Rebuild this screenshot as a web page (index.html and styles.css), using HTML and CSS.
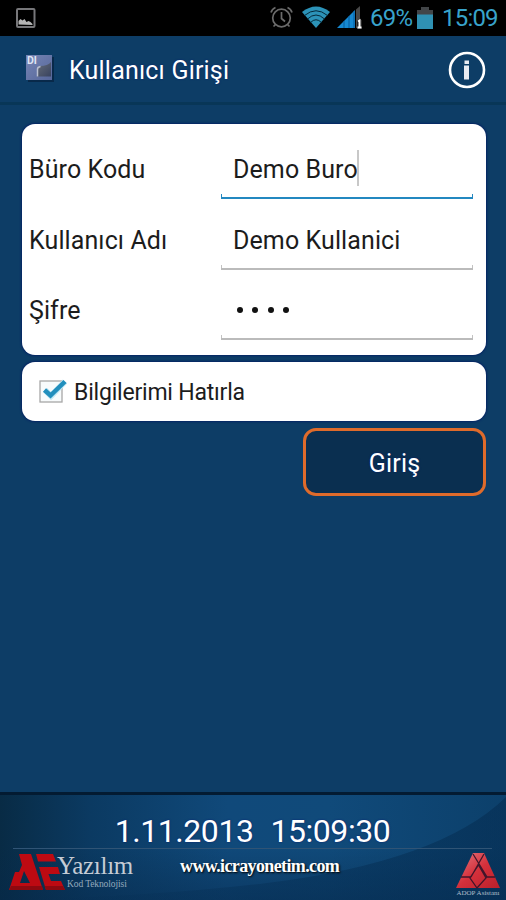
FILE: index.html
```html
<!DOCTYPE html>
<html lang="tr">
<head>
<meta charset="utf-8">
<title>Kullanıcı Girişi</title>
<link rel="stylesheet" href="styles.css">
</head>
<body>
<div class="status">
  <svg class="status-picture" width="20" height="21" viewBox="0 0 20 21"><rect x="1" y="1" width="17.500" height="18" rx="1" fill="none" stroke="#77777a" stroke-width="2"/><path d="M2.500 16.500V13l2-2 2 1.500 2-1.500 2 3 2-1 2 1 2 2v1z" fill="#b5b5b5"/></svg>
  <div class="status-right">
    <svg class="alarm" width="23" height="23" viewBox="0 0 23 23" fill="none" stroke="#6b6b6b" stroke-width="1.700"><circle cx="11.500" cy="12" r="8.800"/><path d="M11.500 6v6.500l3.500 3M1 6.500Q2 3 5.500 1.500M22 6.500Q21 3 17.500 1.500M5.500 18.500l-2 2M17.500 18.500l2 2"/></svg>
    <svg class="wifi" width="28" height="22" viewBox="0 0 28 22"><path d="M0 6Q14-5 28 6L14 22z" fill="#2c93b8"/><path d="M2.500 9.500Q14 0 25.500 9.500M5.500 13Q14 5 22.500 13M8.500 16.500Q14 11 19.500 16.500" fill="none" stroke="#04293a" stroke-width="1"/></svg>
    <svg class="signal" width="26" height="23" viewBox="0 0 26 23"><path d="M0 22L18 4V22z" fill="#1688d0"/><path d="M7 15v7M12 10v12M17 5v17" stroke="#055b9c" stroke-width="1"/><path d="M19 3.500L23 0v22h-4z" fill="#484848"/><path d="M20 14h5v9h-5z" fill="#222"/><path d="M21 15.500l1.500-1v7M20.500 21.500h4" fill="none" stroke="#fff" stroke-width="2"/></svg>
    <span class="percent">69%</span>
    <svg class="battery" width="16" height="22" viewBox="0 0 16 22"><path d="M4 0h8v3h4v5H0V3h4z" fill="#424548"/><path d="M0 7.500h16V22H0z" fill="#2f91b3"/></svg>
    <span class="time">15:09</span>
  </div>
</div>
<header class="header">
  <svg class="app-icon" width="30" height="30" viewBox="0 0 30 30"><defs><linearGradient id="tile" x2="1" y2="1"><stop stop-color="#7585b4"/><stop offset="1" stop-color="#56669a"/></linearGradient><linearGradient id="fold" x2="1" y2="1"><stop stop-color="#8b909d"/><stop offset=".35" stop-color="#565e70"/><stop offset="1" stop-color="#38435f"/></linearGradient></defs><rect x="3" y="3" width="26" height="25" fill="#08294a"/><rect x="1" y="1" width="26" height="25" fill="url(#tile)"/><path d="M12 22.500V15q0-3 3-3 8 0 11-4v14.500z" fill="url(#fold)"/><path d="M12.500 22.500V15q0-2 3-2.500" fill="none" stroke="#b9bfd0" stroke-width="1.500"/><text x="2" y="10" class="tile-text">DI</text></svg>
  <h1>Kullanıcı Girişi</h1>
  <svg class="info" width="38" height="38" viewBox="0 0 38 38"><circle cx="19" cy="19" r="17" fill="none" stroke="#fff" stroke-width="2.600"/><path d="M16.500 9.500h4.500v3.500h-4.500zM16 14.500h5v14h-5z" fill="#e9ebf2"/></svg>
</header>
<main>
  <section class="card fields">
    <div class="row"><label>Büro Kodu</label><div class="field active"><span>Demo Buro</span><i class="caret"></i></div></div>
    <div class="row"><label>Kullanıcı Adı</label><div class="field"><span>Demo Kullanici</span></div></div>
    <div class="row"><label>Şifre</label><div class="field dots"><i></i><i></i><i></i><i></i></div></div>
  </section>
  <section class="card remember">
    <svg width="29" height="25" viewBox="0 0 29 25"><rect x="1" y="2" width="22" height="21" fill="#f8fbfc" stroke="#a7a7a7" stroke-width="1.300"/><path d="M6 11l6 6L26 2.500" fill="none" stroke="#bfe8f5" stroke-width="6"/><path d="M5.500 11l6 5.500L26 2.500" fill="none" stroke="#228fbd" stroke-width="4.500"/></svg>
    <span>Bilgilerimi Hatırla</span>
  </section>
  <button class="login"><span>Giriş</span></button>
</main>
<footer class="footer">
  <svg class="sweep" viewBox="0 0 506 107" preserveAspectRatio="none"><defs><linearGradient id="shade"><stop stop-color="#052d52" stop-opacity="0"/><stop offset=".5" stop-color="#052d52" stop-opacity=".4"/><stop offset="1" stop-color="#052d52" stop-opacity=".6"/></linearGradient></defs><path d="M506 2Q440 68 265 90Q150 104 0 107H506z" fill="url(#shade)"/></svg>
  <div class="clock"><span>1.11.2013</span><span>15:09:30</span></div>
  <div class="brands">
    <div class="yazilim">
      <svg width="56" height="38" viewBox="0 0 56 38"><defs><linearGradient id="red" x2="0" y2="1" gradientUnits="userSpaceOnUse" y1="0"><stop stop-color="#c20b13"/><stop offset="1" stop-color="#b70810"/></linearGradient></defs><path fill="#bd0a12" fill-rule="evenodd" d="M10 1H22L34 37H0L6 19H10L13 12zM15 18L11 30H21zM27 1H44L47 8.500H29zM30 14H49L51 21H39.500L42 28H52L56 37H37z"/><path d="M0 37L2 33H33L34 37zM37 37L35.500 33H54L56 37z" fill="#8d0910"/></svg>
      <div class="brand-text"><span class="name">Yazılım</span><span class="tag">Kod Teknolojisi</span></div>
    </div>
    <span class="url">www.icrayonetim.com</span>
    <div class="assistant">
      <svg width="44" height="36" viewBox="0 0 44 36"><defs><linearGradient id="tri" x2="1" y2="1"><stop stop-color="#e37a82"/><stop offset=".5" stop-color="#d4303b"/><stop offset="1" stop-color="#b9202b"/></linearGradient></defs><path d="M17 0H28L44 35H0z" fill="url(#tri)"/><path d="M17 1L31 24M28 1L15 24M22.500 12L14 25 21 35 30 25zM5 24H15M30 24H39" fill="none" stroke="#42152a" stroke-width="1.300"/></svg>
      <span>ADOP Asistanı</span>
    </div>
  </div>
</footer>
</body>
</html>
```
FILE: styles.css
```css
* { box-sizing: border-box; }
body { margin: 0; width: 506px; height: 900px; overflow: hidden; display: flex; flex-direction: column; background: #0d3d66; font-family: Roboto, sans-serif; color: #1c1c1c; }
svg { display: block; flex: none; }
span, label, h1 { white-space: nowrap; }
.status { height: 36px; flex: none; background: #000; display: flex; justify-content: space-between; padding: 0 8px 0 16px; }
.status-picture { margin-top: 8px; }
.status-right { display: flex; align-items: flex-start; color: #38a3cb; font-size: 24px; line-height: 37px; }
.alarm { margin: 6px 9px 0 0; }
.wifi { margin: 6px 7px 0 0; }
.signal { margin: 6px 7px 0 0; }
.percent { width: 42px; letter-spacing: -0.7px; margin-right: 5px; }
.battery { margin: 7px 9px 0 0; }
.time { width: 56px; letter-spacing: -0.8px; }
.header { height: 69px; flex: none; border-bottom: 3px solid #083657; display: flex; align-items: center; padding: 0 20px 0 25px; }
.app-icon { margin-right: 14px; }
.tile-text { font: bold 10.5px Roboto, sans-serif; fill: #dfe5f4; }
h1 { margin: 4px auto 0 0; font-size: 25px; font-weight: 400; line-height: 30px; letter-spacing: 0.2px; color: #fff; text-shadow: 0 0 2px #061d72; }
.info { margin: 1px 0 0; }
main { flex: 1; padding: 19px 20px 0 22px; display: flex; flex-direction: column; }
.card { width: 464px; background: #fff; border-radius: 13px; box-shadow: 0 0 2px 1px #052463; }
.fields { height: 231px; padding: 11px 13px 0 7px; }
.row { height: 70.5px; display: flex; font-size: 25px; line-height: 70px; letter-spacing: 0.1px; }
.row label { width: 192px; }
.field { position: relative; flex: 1; display: flex; align-items: center; height: 64px; padding: 8px 0 0 12px; border-bottom: 2px solid #bbb; }
.field::before, .field::after { content: ""; position: absolute; bottom: 0; height: 3px; width: 1px; background: #c2c2c2; }
.field::before { left: 0; }
.field::after { right: 0; }
.field.active { border-color: #2388c0; padding-top: 7px; }
.field.active::before, .field.active::after { background: #2388c0; }
.caret { width: 2px; height: 36px; background: #c8c8c8; margin: -4px 0 0 -1px; }
.field.dots { gap: 9.4px; padding: 5px 0 0 16px; }
.dots i { width: 6px; height: 6px; border-radius: 50%; background: #111; }
.remember { height: 59px; margin-top: 7px; display: flex; align-items: center; padding-left: 17px; font-size: 23px; letter-spacing: -0.2px; }
.remember span { margin-left: 6px; padding-top: 2px; }
.login { align-self: flex-end; width: 183px; height: 68px; margin: 7px 0 0; border: 3px solid #df6b2b; border-radius: 13px; background: #0a2f50; color: #fff; font: 25px Roboto, sans-serif; letter-spacing: 0.2px; padding: 2px 0 0; text-shadow: 0 0 2px #061d72; }
.footer { position: relative; height: 108px; flex: none; border-top: 3px solid #031b32; background: linear-gradient(#06284a00 50%, #06284a70), linear-gradient(90deg, #082b45, #0b3a62 18%, #10497a 45%, #104a7a 65%, #0c406b); color: #fff; padding: 0 6px 0 9px; }
.sweep { position: absolute; inset: 0; width: 506px; height: 105px; }
.clock { position: relative; height: 54px; padding-top: 17px; margin: 0 8px 0 4px; border-bottom: 1px solid #305475; display: flex; justify-content: center; gap: 17px; font-size: 32px; line-height: 38px; letter-spacing: -0.45px; text-shadow: 0 0 2px #061d72; }
.brands { position: relative; display: flex; align-items: flex-start; font-family: "Liberation Serif", serif; }
.yazilim { display: flex; margin-top: 4px; width: 171px; }
.brand-text { display: flex; flex-direction: column; margin-left: -8px; color: #c5ccd5; }
.name { font-size: 25px; line-height: 26px; letter-spacing: -0.3px; }
.tag { margin-left: 10px; font-size: 9.5px; line-height: 10px; letter-spacing: -0.1px; color: #95aabd; }
.url { margin-top: 6px; font-size: 18px; font-weight: bold; line-height: 22px; letter-spacing: -0.62px; text-shadow: 1px 1px 2px #000; }
.assistant { display: flex; flex-direction: column; align-items: center; margin: 4px 0 0 auto; font-size: 7px; line-height: 9px; color: #aebcc8; }
```
